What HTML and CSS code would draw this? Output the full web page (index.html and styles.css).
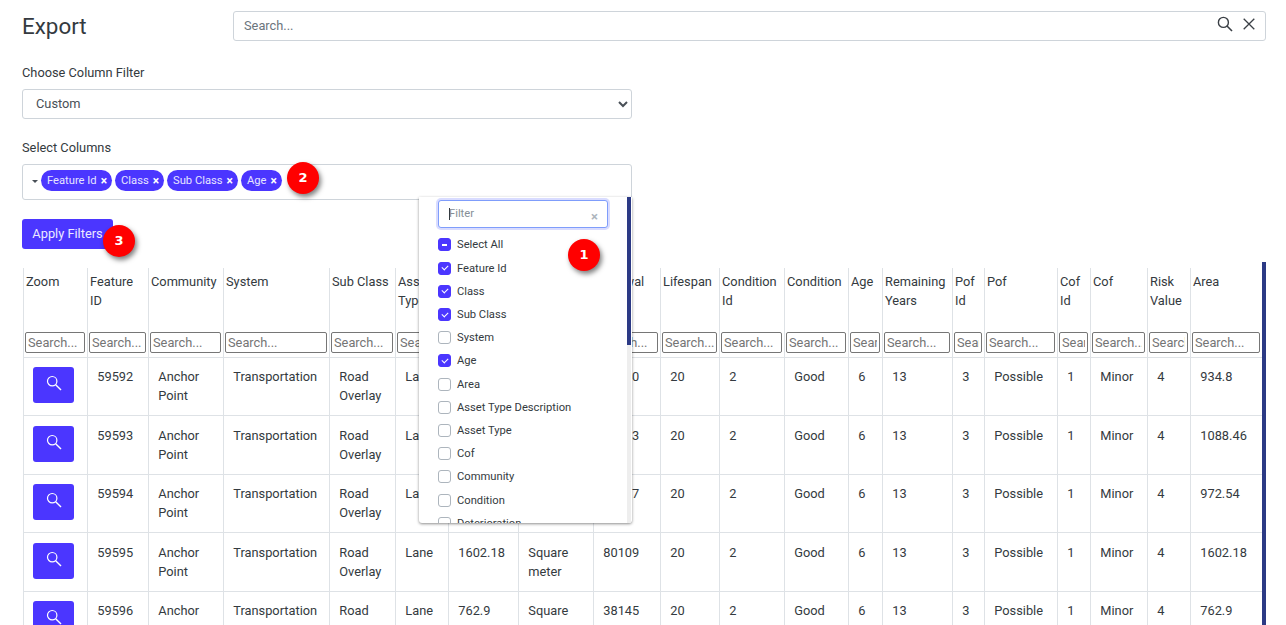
FILE: index.html
```html
<!DOCTYPE html>
<html lang="en">
<head>
<meta charset="utf-8">
<title>Export</title>
<link rel="stylesheet" href="styles.css">
</head>
<body>
<main class="page">
  <header class="top">
    <h1 class="title">Export</h1>
    <div class="search">
      <input class="search-input" type="text" placeholder="Search...">
      <svg class="search-icon" width="16" height="16" viewBox="0 0 16 16"><circle cx="6.4" cy="6.4" r="5" fill="none" stroke="#3a3f45" stroke-width="1.4"/><path d="M10 10l5 5" stroke="#3a3f45" stroke-width="1.6" fill="none"/></svg>
      <svg class="clear-icon" width="12" height="12" viewBox="0 0 12 12"><path d="M.7.7l10.6 10.6M11.3.7L.7 11.3" stroke="#3a3f45" stroke-width="1.3" fill="none"/></svg>
    </div>
  </header>

  <section class="filters">
    <label class="label">Choose Column Filter</label>
    <select class="select"><option>Custom</option></select>
    <label class="label label-columns">Select Columns</label>
    <div class="multi">
      <span class="caret"></span>
      <span class="chip">Feature Id<b>×</b></span>
      <span class="chip">Class<b>×</b></span>
      <span class="chip">Sub Class<b>×</b></span>
      <span class="chip">Age<b>×</b></span>
      <span class="badge badge-2">2</span>
    </div>
    <div class="apply-row">
      <button class="apply" type="button">Apply Filters</button>
      <span class="badge badge-3">3</span>
    </div>
  </section>

  <div class="dropdown">
    <div class="dd-filter"><input class="dd-input" type="text" placeholder="Filter"><span class="dd-cursor"></span><span class="dd-clear">×</span></div>
    <ul class="dd-list">
      <li class="dd-item"><span class="cb cb-mixed"></span>Select All</li>
      <li class="dd-item"><span class="cb cb-on"></span>Feature Id</li>
      <li class="dd-item"><span class="cb cb-on"></span>Class</li>
      <li class="dd-item"><span class="cb cb-on"></span>Sub Class</li>
      <li class="dd-item"><span class="cb"></span>System</li>
      <li class="dd-item"><span class="cb cb-on"></span>Age</li>
      <li class="dd-item"><span class="cb"></span>Area</li>
      <li class="dd-item"><span class="cb"></span>Asset Type Description</li>
      <li class="dd-item"><span class="cb"></span>Asset Type</li>
      <li class="dd-item"><span class="cb"></span>Cof</li>
      <li class="dd-item"><span class="cb"></span>Community</li>
      <li class="dd-item"><span class="cb"></span>Condition</li>
      <li class="dd-item"><span class="cb"></span>Deterioration</li>
    </ul>
    <div class="dd-track"><div class="dd-thumb"></div></div>
    <span class="badge badge-1">1</span>
  </div>

  <div class="table-area">
    <table class="grid">
      <colgroup>
        <col class="c64"><col class="c61"><col class="c75"><col class="c106"><col class="c66"><col class="c53"><col class="c70"><col class="c75"><col class="c67"><col class="c59"><col class="c65"><col class="c64"><col class="c34"><col class="c70"><col class="c32"><col class="c73"><col class="c33"><col class="c57"><col class="c43"><col class="c71">
      </colgroup>
      <thead>
        <tr class="head">
          <th>Zoom</th><th>Feature ID</th><th>Community</th><th>System</th><th>Sub Class</th><th>Asset Type</th><th>Quantity</th><th>Unit</th><th>Renewal</th><th>Lifespan</th><th>Condition Id</th><th>Condition</th><th>Age</th><th>Remaining Years</th><th>Pof Id</th><th>Pof</th><th>Cof Id</th><th>Cof</th><th>Risk Value</th><th>Area</th>
        </tr>
        <tr class="filter">
          <th><input placeholder="Search..."></th><th><input placeholder="Search..."></th><th><input placeholder="Search..."></th><th><input placeholder="Search..."></th><th><input placeholder="Search..."></th><th><input placeholder="Search..."></th><th><input placeholder="Search..."></th><th><input placeholder="Search..."></th><th><input placeholder="Search..."></th><th><input placeholder="Search..."></th><th><input placeholder="Search..."></th><th><input placeholder="Search..."></th><th><input placeholder="Search..."></th><th><input placeholder="Search..."></th><th><input placeholder="Search..."></th><th><input placeholder="Search..."></th><th><input placeholder="Search..."></th><th><input placeholder="Search..."></th><th><input placeholder="Search..."></th><th><input placeholder="Search..."></th>
        </tr>
      </thead>
      <tbody>
        <tr>
          <td class="zoom"><button class="zoom-btn" type="button"><svg width="16" height="16" viewBox="0 0 16 16"><circle cx="6.2" cy="6.2" r="4.7" fill="none" stroke="#fff" stroke-width="1.2"/><path d="M9.7 9.7l5.3 5.3" stroke="#fff" stroke-width="1.4" fill="none"/></svg></button></td>
          <td>59592</td><td>Anchor Point</td><td>Transportation</td><td>Road Overlay</td><td>Lane</td><td>934.8</td><td>Square meter</td><td>46740</td><td>20</td><td>2</td><td>Good</td><td>6</td><td>13</td><td>3</td><td>Possible</td><td>1</td><td>Minor</td><td>4</td><td>934.8</td>
        </tr>
        <tr>
          <td class="zoom"><button class="zoom-btn" type="button"><svg width="16" height="16" viewBox="0 0 16 16"><circle cx="6.2" cy="6.2" r="4.7" fill="none" stroke="#fff" stroke-width="1.2"/><path d="M9.7 9.7l5.3 5.3" stroke="#fff" stroke-width="1.4" fill="none"/></svg></button></td>
          <td>59593</td><td>Anchor Point</td><td>Transportation</td><td>Road Overlay</td><td>Lane</td><td>1088.46</td><td>Square meter</td><td>54423</td><td>20</td><td>2</td><td>Good</td><td>6</td><td>13</td><td>3</td><td>Possible</td><td>1</td><td>Minor</td><td>4</td><td>1088.46</td>
        </tr>
        <tr>
          <td class="zoom"><button class="zoom-btn" type="button"><svg width="16" height="16" viewBox="0 0 16 16"><circle cx="6.2" cy="6.2" r="4.7" fill="none" stroke="#fff" stroke-width="1.2"/><path d="M9.7 9.7l5.3 5.3" stroke="#fff" stroke-width="1.4" fill="none"/></svg></button></td>
          <td>59594</td><td>Anchor Point</td><td>Transportation</td><td>Road Overlay</td><td>Lane</td><td>972.54</td><td>Square meter</td><td>48627</td><td>20</td><td>2</td><td>Good</td><td>6</td><td>13</td><td>3</td><td>Possible</td><td>1</td><td>Minor</td><td>4</td><td>972.54</td>
        </tr>
        <tr>
          <td class="zoom"><button class="zoom-btn" type="button"><svg width="16" height="16" viewBox="0 0 16 16"><circle cx="6.2" cy="6.2" r="4.7" fill="none" stroke="#fff" stroke-width="1.2"/><path d="M9.7 9.7l5.3 5.3" stroke="#fff" stroke-width="1.4" fill="none"/></svg></button></td>
          <td>59595</td><td>Anchor Point</td><td>Transportation</td><td>Road Overlay</td><td>Lane</td><td>1602.18</td><td>Square meter</td><td>80109</td><td>20</td><td>2</td><td>Good</td><td>6</td><td>13</td><td>3</td><td>Possible</td><td>1</td><td>Minor</td><td>4</td><td>1602.18</td>
        </tr>
        <tr>
          <td class="zoom"><button class="zoom-btn" type="button"><svg width="16" height="16" viewBox="0 0 16 16"><circle cx="6.2" cy="6.2" r="4.7" fill="none" stroke="#fff" stroke-width="1.2"/><path d="M9.7 9.7l5.3 5.3" stroke="#fff" stroke-width="1.4" fill="none"/></svg></button></td>
          <td>59596</td><td>Anchor Point</td><td>Transportation</td><td>Road Overlay</td><td>Lane</td><td>762.9</td><td>Square meter</td><td>38145</td><td>20</td><td>2</td><td>Good</td><td>6</td><td>13</td><td>3</td><td>Possible</td><td>1</td><td>Minor</td><td>4</td><td>762.9</td>
        </tr>
      </tbody>
    </table>
    <div class="page-bar"></div>
  </div>
</main>
</body>
</html>
```
FILE: styles.css
```css
* { box-sizing: border-box; }
html, body { margin: 0; height: 100%; overflow: hidden; background: #fff; }
body { font-family: Roboto, "Liberation Sans", sans-serif; font-size: 12.8px; color: #343a40; }
.page { position: relative; height: 625px; overflow: hidden; padding: 11px 20px 0 22px; }

.top { display: flex; height: 30px; align-items: center; }
.title { margin: 0; width: 211px; font-size: 22.4px; font-weight: 400; line-height: 30px; color: #343a40; }
.search { position: relative; flex: 1; height: 30px; }
.search-input { width: 100%; height: 100%; border: 1px solid #ced4da; border-radius: 3px; padding: 0 10px 1px; font: 12.8px Roboto, sans-serif; outline: none; }
.search-input::placeholder { color: #6c757d; opacity: 1; }
.search-icon { position: absolute; left: 984px; top: 5px; }
.clear-icon { position: absolute; left: 1010px; top: 7px; }

.filters { display: flex; flex-direction: column; align-items: flex-start; }
.label { margin-top: 22px; height: 19px; line-height: 19px; font-size: 12.8px; color: #343a40; }
.label-columns { margin-top: 19px; }
.select { width: 610px; height: 30px; margin-top: 7px; border: 1px solid #ced4da; border-radius: 3px; background: #fff; color: #495057; font: 12.8px Roboto, sans-serif; padding: 0 9px 2px; outline: none; }
.multi { position: relative; margin-top: 7px; width: 610px; height: 36px; border: 1px solid #ced4da; border-radius: 3px; display: flex; align-items: center; gap: 3px; padding: 0 0 3px 18px; }
.caret { position: absolute; left: 9px; top: 15px; border: 3px solid transparent; border-top: 3px solid #495057; border-bottom: 0; }
.chip { display: inline-flex; align-items: center; height: 21px; padding: 0 5px 0 6px; border-radius: 11px; background: #4b36ff; color: #e6e4ff; font-size: 11.2px; white-space: nowrap; }
.chip b { margin-left: 4px; font-size: 12px; font-weight: 700; color: #fff; }
.apply-row { position: relative; margin-top: 19px; }
.apply { display: block; width: 91px; height: 30px; border: 0; border-radius: 3px; background: #4b36ff; color: #ece9ff; font: 12.8px Roboto, sans-serif; padding: 0 0 1px; }

.badge { position: absolute; width: 32px; height: 32px; border-radius: 50%; background: #f00; color: #fff; font: 700 13px/32px "DejaVu Sans", sans-serif; text-align: center; box-shadow: 2px 3px 5px rgba(0,0,0,.5); }
.badge-2 { left: 264px; top: -3px; }
.badge-3 { left: 81px; top: 6px; }
.badge-1 { left: 149px; top: 42px; }

.dropdown { position: absolute; z-index: 5; left: 419px; top: 197px; width: 213px; height: 326px; background: #fff; border-radius: 0 0 3px 3px; box-shadow: 0 1px 3px rgba(0,0,0,.45); overflow: hidden; }
.dd-filter { position: absolute; left: 19px; top: 3px; width: 170px; height: 28px; }
.dd-input { width: 100%; height: 100%; border: 1px solid #7f9dfb; border-radius: 3px; box-shadow: 0 0 0 2px #d9dcff; padding: 0 10px 2px; font: 11.2px Roboto, sans-serif; outline: none; }
.dd-input::placeholder { color: #868e96; opacity: 1; }
.dd-cursor { position: absolute; left: 11px; top: 8px; width: 1px; height: 12px; background: #343a40; }
.dd-clear { position: absolute; right: 10px; top: 10px; color: #adb5bd; font-size: 13px; line-height: 13px; font-weight: 700; }
.dd-list { position: absolute; left: 19px; top: 36.4px; margin: 0; padding: 0; list-style: none; }
.dd-item { display: flex; align-items: center; height: 23.2px; font-size: 11.2px; color: #343a40; white-space: nowrap; }
.cb { position: relative; flex: none; width: 13px; height: 13px; margin-right: 6px; border: 1px solid #adb5bd; border-radius: 3px; background: #fff; }
.cb-on, .cb-mixed { background: #4b36ff; border-color: #4b36ff; }
.cb-on::after { content: ""; position: absolute; left: 3px; top: 2.5px; width: 5px; height: 3px; border-left: 1.6px solid #fff; border-bottom: 1.6px solid #fff; transform: rotate(-45deg); }
.cb-mixed::after { content: ""; position: absolute; left: 3px; top: 5px; width: 5px; height: 1.5px; background: #fff; }
.dd-track { position: absolute; right: 1px; top: 0; width: 4px; height: 100%; background: #eee; }
.dd-thumb { height: 148px; background: #2c3a85; }

.table-area { position: absolute; left: 23px; top: 262px; right: 20px; display: flex; align-items: flex-start; }
.grid { margin-top: 6px; width: 1238px; flex: none; table-layout: fixed; border-collapse: collapse; font-size: 12.8px; line-height: 19.2px; }
.c64 { width: 64px; } .c61 { width: 61px; } .c75 { width: 75px; } .c106 { width: 106px; } .c66 { width: 66px; } .c53 { width: 53px; } .c70 { width: 70px; } .c67 { width: 67px; } .c59 { width: 59px; } .c65 { width: 65px; } .c34 { width: 34px; } .c32 { width: 32px; } .c73 { width: 73px; } .c33 { width: 33px; } .c57 { width: 57px; } .c43 { width: 43px; } .c71 { width: 71px; }
.grid th, .grid td { border-left: 1px solid #dee2e6; overflow: hidden; vertical-align: top; text-align: left; }
.grid th { font-weight: 400; }
.head th { height: 60px; padding: 4px 2px 0; }
.filter th { height: 29px; padding: 4px 2px 0 1px; border-bottom: 1px solid #dee2e6; }
.filter input { display: block; width: 100%; height: 21px; border: 1px solid #767676; border-radius: 2px; padding: 0 2px; font: 12.8px Roboto, sans-serif; color: #343a40; background: #fff; outline: none; }
.filter input::placeholder { color: #757575; opacity: 1; }
.grid td { padding: 9.6px 9.3px; border-bottom: 1px solid #dee2e6; }
.grid td.zoom { padding: 9.6px 9px 0; }
.zoom-btn { display: flex; align-items: flex-start; justify-content: center; width: 41px; height: 36px; padding: 8px 0 0; border: 0; border-radius: 3px; background: #4b36ff; }
.page-bar { flex: none; width: 4px; height: 363px; background: #2c3a85; }
```
